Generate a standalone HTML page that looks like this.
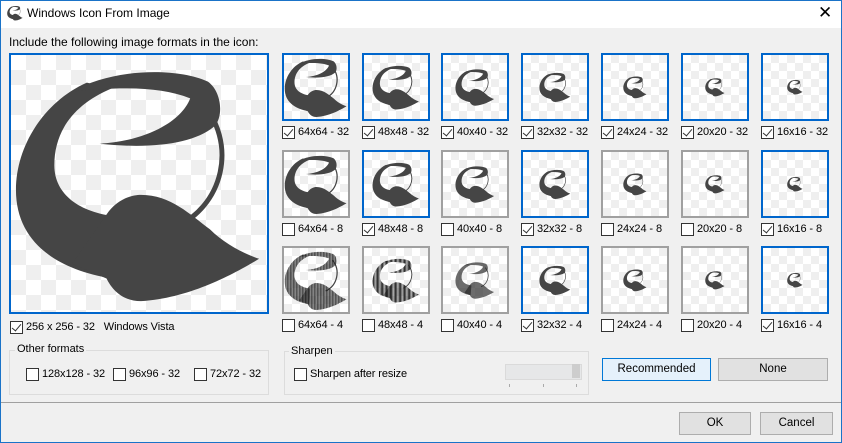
<!DOCTYPE html>
<html><head><meta charset="utf-8"><style>
*{box-sizing:border-box;margin:0;padding:0}
body{width:842px;height:443px;background:#f0f0f0;font-family:"Liberation Sans",sans-serif;font-size:12px;color:#000;position:relative;overflow:hidden}
.win{position:absolute;left:0;top:0;width:842px;height:443px;border:1px solid #1a73c8}
.title{position:absolute;left:1px;top:1px;width:840px;height:27px;background:#fff}
.a{position:absolute;white-space:nowrap}
.s{font-size:11px;letter-spacing:-0.1px;top:auto}
.chk{position:absolute;width:13px;height:13px;border:1px solid #333;background:#fff}
.chk.on::after{content:"";position:absolute;left:3px;top:0px;width:4px;height:8px;border-right:1px solid #333;border-bottom:1px solid #333;transform:rotate(40deg)}
.box{position:absolute;width:68px;height:68px;border:2px solid #a0a0a0;background-color:#fff;background-image:conic-gradient(#efefef 25%,#fff 0 50%,#efefef 0 75%,#fff 0);background-size:16px 16px}
.box.b{border-color:#0066cc}
.box svg{position:absolute}
.grp{position:absolute;border:1px solid #dcdcdc}
.btn{position:absolute;border:1px solid #adadad;background:#e1e1e1;text-align:center;line-height:21px}
</style></head><body>
<svg width="0" height="0" style="position:absolute">
<defs>
<pattern id="h" width="3" height="3" patternUnits="userSpaceOnUse"><rect width="2" height="3" fill="#222"/></pattern>
<g id="ic">
<path d="M194,49 A80,80 0 0 1 167,172" fill="none" stroke="#444" stroke-width="5"/>
<path d="M75,26 C32,45 3,90 3,135 C3,185 40,215 100,225 L105,162 C68,158 42,140 42,110 C42,75 62,48 100,32 Z"/>
<path d="M60,35 C100,12 165,10 198,25 C212,35 214,60 205,70 C185,88 140,94 88,88 C130,86 170,68 180,42 C150,30 110,30 60,35 Z"/>
<path d="M95,160 C105,145 120,140 130,140 C160,140 180,160 200,175 C215,190 235,200 250,205 C225,220 180,245 130,248 C110,248 100,235 95,225 L60,210 Z"/>
</g>
</defs></svg>
<div class="win"></div>
<div class="title"></div>
<svg class="a" style="left:7px;top:5px" width="16" height="16" viewBox="0 0 256 256" fill="#444"><use href="#ic"/></svg>
<div class="a" style="left:27px;top:6px;font-size:12px">Windows Icon From Image</div>
<div class="a" style="left:818px;top:3px;font-size:17px">✕</div>
<div class="a" style="left:9px;top:35px">Include the following image formats in the icon:</div>
<div class="box b" style="left:9px;top:53px;width:260px;height:261px;background-size:30px 30px">
<svg style="left:2px;top:2px" width="252" height="252" viewBox="0 0 256 256" fill="#454545"><use href="#ic"/></svg></div>
<div class="chk on" style="left:10px;top:321px"></div>
<div class="a s" style="left:26px;top:321px">256 x 256 - 32 &nbsp; Windows Vista</div>

<div id="grid"></div>
<script>
var xs=[282,362,441,521,601,681,761],sz=[64,48,40,32,24,20,16],nm=["64x64","48x48","40x40","32x32","24x24","20x20","16x16"];
var ys=[53,150,246],bits=["32","8","4"];
var on=[[1,1,1,1,1,1,1],[0,1,0,1,0,0,1],[0,0,0,1,0,0,1]];
var h="";
for(var r=0;r<3;r++)for(var c=0;c<7;c++){
 var s=sz[c],o=(64-s)/2;
 var fill=r==2&&c<3?"url(#h)":"#454545";
 h+='<div class="box'+(on[r][c]?' b':'')+'" style="left:'+xs[c]+'px;top:'+ys[r]+'px"><svg style="left:'+o+'px;top:'+o+'px" width="'+s+'" height="'+s+'" viewBox="0 0 256 256" fill="'+fill+'"><use href="#ic"/></svg></div>';
 h+='<div class="chk'+(on[r][c]?' on':'')+'" style="left:'+xs[c]+'px;top:'+(ys[r]+73)+'px"></div>';
 h+='<div class="a s" style="left:'+(xs[c]+16)+'px;top:'+(ys[r]+73)+'px">'+nm[c]+' - '+bits[r]+'</div>';
}
document.getElementById("grid").innerHTML=h;
</script>

<div class="grp" style="left:9px;top:350px;width:260px;height:45px"></div>
<div class="a" style="left:15px;top:343px;background:#f0f0f0;padding:0 2px;font-size:11px">Other formats</div>
<div class="chk" style="left:26px;top:368px"></div><div class="a s" style="left:42px;top:368px">128x128 - 32</div>
<div class="chk" style="left:113px;top:368px"></div><div class="a s" style="left:129px;top:368px">96x96 - 32</div>
<div class="chk" style="left:194px;top:368px"></div><div class="a s" style="left:210px;top:368px">72x72 - 32</div>

<div class="grp" style="left:284px;top:351px;width:305px;height:44px"></div>
<div class="a" style="left:289px;top:345px;background:#f0f0f0;padding:0 2px;font-size:11px">Sharpen</div>
<div class="chk" style="left:294px;top:368px"></div><div class="a s" style="left:310px;top:368px">Sharpen after resize</div>
<div class="a" style="left:505px;top:364px;width:77px;height:16px;background:#e6e7e8;border:1px solid #dadada"></div>
<div class="a" style="left:572px;top:364px;width:8px;height:14px;background:#cdcdcd"></div>
<div class="a" style="left:509px;top:384px;width:1px;height:3px;background:#aaa"></div>
<div class="a" style="left:543px;top:384px;width:1px;height:3px;background:#aaa"></div>
<div class="a" style="left:576px;top:384px;width:1px;height:3px;background:#aaa"></div>

<div class="btn" style="left:602px;top:358px;width:109px;height:23px;background:#e5f1fb;border-color:#0078d7;font-size:11.5px">Recommended</div>
<div class="btn" style="left:718px;top:358px;width:110px;height:23px;font-size:11.5px">None</div>
<div class="a" style="left:1px;top:402px;width:840px;height:1px;background:#a0a0a0"></div>
<div class="btn" style="left:679px;top:412px;width:72px;height:23px;font-size:11.5px">OK</div>
<div class="btn" style="left:760px;top:412px;width:73px;height:23px;font-size:11.5px">Cancel</div>
</body></html>
